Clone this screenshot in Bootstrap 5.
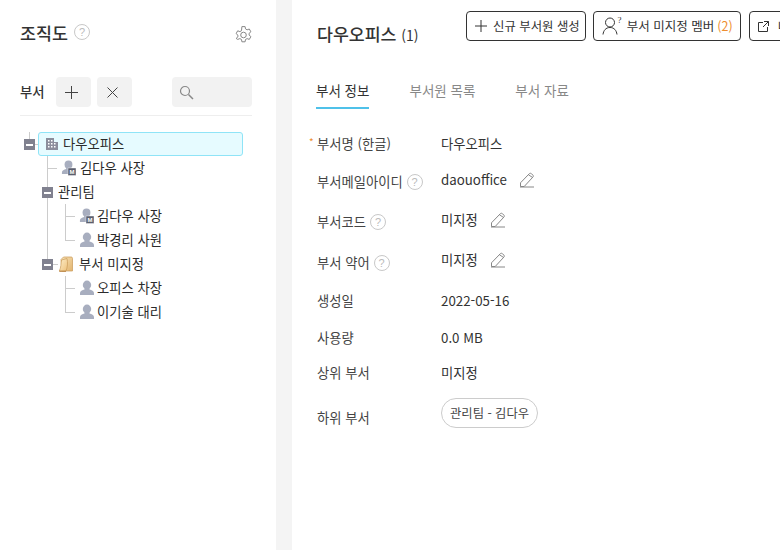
<!DOCTYPE html>
<html lang="ko">
<head>
<meta charset="utf-8">
<title>조직도</title>
<link href="https://cdn.jsdelivr.net/npm/bootstrap@5.3.0/dist/css/bootstrap.min.css" rel="stylesheet">
<style>
html,body{margin:0;height:100%;overflow:hidden;background:#fff}
body{font-family:"Noto Sans CJK KR","Noto Sans",sans-serif;font-size:13.3px;color:#333;line-height:1.3}
.app-shell{width:780px;height:550px;overflow:hidden}
.org-side{width:276px;flex:0 0 276px;padding:22px 24px 0 20px}
.org-gutter{width:16px;flex:0 0 16px;background:#f4f4f4}
.org-main{flex:1 1 auto;min-width:0;overflow:hidden;padding:11px 0 0 25px}
.side-head{height:27px}
.side-title{font-size:17.4px;font-weight:500;color:#333}
.hint{width:16px;height:16px;border:1px solid #c8c8c8;border-radius:50%;color:#bbb;font-size:11px;line-height:14px;text-align:center;font-family:"Liberation Sans",sans-serif;flex:none}
.title-hint{margin-left:6px;margin-bottom:3px}
.side-tools{margin-top:28px;height:30px;margin-bottom:8px}
.tools-label{font-weight:500;color:#333;width:36px}
.tool-btn{width:35px;height:30px;padding:0;background:#f2f2f2;border:0;border-radius:4px;display:flex;align-items:center;justify-content:center}
.tool-plus{padding-right:4px}
.tool-cross{margin-left:6px;padding-right:5px}
.tool-search{width:80px;height:30px;background:#f2f2f2;border-radius:4px;padding-left:7px;margin-left:40px}
.tool-rule{height:1px;background:#eee;margin-bottom:16px}
.org-tree{margin-left:-20px}
.tree-row{height:24px}
.ind24{width:24px;flex:none}
.ind42{width:42px;flex:none}
.ind47{width:47px;flex:none}
.ind65{width:65px;flex:none}
.tree-exp{width:11px;height:24px;flex:none;display:flex;align-items:center;justify-content:center}
.exp-box{width:11px;height:11px;background:#80818f;display:flex;align-items:center;justify-content:center}
.exp-box::before{content:"";width:7px;height:1px;background:#fff;box-shadow:0 1px 0 #fff}
.line-full{background:linear-gradient(#ccc,#ccc) 5px 0/1px 100% no-repeat}
.line-top{background:linear-gradient(#ccc,#ccc) 5px 0/1px 50% no-repeat}
.stub3{width:3px;height:1px;background:#ccc;flex:none}
.stub5{width:5px;height:1px;background:#ccc;flex:none}
.guide-v{width:18px;height:24px;flex:none;background:linear-gradient(#ccc,#ccc) 0 0/1px 100% no-repeat}
.guide-t,.guide-l{width:14px;height:24px;flex:none}
.guide-t{background:linear-gradient(#ccc,#ccc) 0 0/1px 100% no-repeat,linear-gradient(#ccc,#ccc) 0 50%/10px 1px no-repeat}
.guide-l{background:linear-gradient(#ccc,#ccc) 0 0/1px 50% no-repeat,linear-gradient(#ccc,#ccc) 0 50%/10px 1px no-repeat}
.tree-sel{width:205px;height:24px;background:#e6fbff;border:1px solid #8fe4f7;border-radius:3px;padding-left:6px}
.tree-txt{color:#2b2b2b;white-space:nowrap;font-size:13.3px;margin-bottom:1px}
.tg2{margin-left:2px}.tg3{margin-left:3px}.tg5{margin-left:5px}
.main-head{height:30px}
.main-title{font-size:17.3px;font-weight:500;color:#333;width:149px;flex:none;padding-top:12px;white-space:nowrap}
.main-count{font-size:14px;font-weight:400}
.act-btn{height:30px;padding:0 7px 0 8px;font-size:12.5px;line-height:1;color:#333;background:#fff;border:1px solid #333;border-radius:4px;white-space:nowrap;flex:none;display:flex;align-items:center}
.act-btn:hover{color:#333;background:#fff;border-color:#333}
.act-gap1{margin-right:7px;gap:6px;padding-right:5px;font-size:12.4px}
.act-gap2{margin-right:8px;gap:5px}
.act-gap3{gap:9px}
.orange{color:#ee8e2f;margin-left:-2px}
.tab-bar{margin-top:37px;margin-left:-1px;gap:40px;height:31px;flex-wrap:nowrap}
.tab-item{color:#888;padding:0;font-size:13.5px;height:31px;line-height:24px;white-space:nowrap;border-bottom:2px solid transparent}
.tab-item:hover{color:#888}
.tab-item.on,.tab-item.on:hover{color:#333;border-bottom-color:#4fc1e9}
.form-list{margin-top:16px}
.info-row{display:flex;align-items:center;white-space:nowrap}
.info-key{width:124px;flex:none;position:relative;display:flex;align-items:center;gap:4px;color:#444}
.info-val{display:flex;align-items:center;color:#333}
.req{position:absolute;left:-8px;top:0;color:#ee8e2f;font-size:10px}
.h-a{height:37px}.h-b{height:39px}.h-c{height:41px}.h-d{height:35px}.h-e{height:39px}.h-f{height:31px}.h-g{height:59px}
.lift2{margin-top:-3px}.lift3{margin-top:-5px}
.edit-g{margin-left:12px}
.sub-chip{height:30px;padding:0 8px;border:1px solid #ccc;border-radius:15px;font-size:12.3px;color:#444;display:flex;align-items:center;margin-top:-10px}
svg{display:block;flex:none}
.sprite{position:absolute;width:0;height:0}
</style>
</head>
<body>
<svg class="sprite" width="0" height="0">
  <defs>
    <symbol id="person" viewBox="0 0 16 16"><ellipse cx="8" cy="5" rx="4.200" ry="4.400" fill="#a8aebf"/><path d="M5.500 7.500h5v2c2.200.6 4.500 1.500 4.500 3.600V15H1v-1.900c0-2.100 2.300-3 4.500-3.600z" fill="#a8aebf"/></symbol>
    <symbol id="pencil" viewBox="0 0 16 16"><path d="M1.500 10.800 10.200 1.800c.8-.8 1.700-.7 2.500.1l1 1c.8.800.8 1.700 0 2.400L5.200 14.500H1.500zM1 15h14M9.400 2.700l4.500 3" fill="none" stroke="#888" stroke-width="1"/></symbol>
    <symbol id="gear" viewBox="0 0 17 18"><path d="M6.900 1h3.200l.4 2.300 1.600.9 2.200-.8 1.600 2.800-1.800 1.500v1.800l1.800 1.500-1.600 2.800-2.200-.8-1.600.9-.4 2.300H6.900l-.4-2.300-1.600-.9-2.200.8L1.100 12.800 2.900 11.300V9.500L1.100 8 2.700 5.200l2.200.8 1.600-.9z" transform="translate(0 -.4)" fill="none" stroke="#888" stroke-width="1" stroke-linejoin="round"/><circle cx="8.500" cy="9" r="2.800" fill="none" stroke="#888" stroke-width="1"/></symbol>
    <symbol id="person-m" viewBox="0 0 16 16"><use href="#person" width="15" height="15"/><rect x="7" y="8" width="8" height="7.500" fill="#5c5f6e" stroke="#fff" stroke-width=".4"/><text x="11" y="14" font-size="6" font-weight="700" text-anchor="middle" fill="#fff" font-family="Liberation Sans">M</text></symbol>
    <linearGradient id="fold-a" x1="0" y1="0" x2="1" y2="1"><stop offset="0" stop-color="#f8e3b8"/><stop offset="1" stop-color="#e2b46f"/></linearGradient>
    <linearGradient id="fold-b" x1="0" y1="0" x2="1" y2="1"><stop offset="0" stop-color="#fdeecb"/><stop offset="1" stop-color="#eec27c"/></linearGradient>
  </defs>
</svg>
<div class="app-shell d-flex">
  <aside class="org-side">
    <div class="side-head d-flex align-items-start justify-content-between">
      <div class="d-flex align-items-center"><span class="side-title">조직도</span><span class="hint title-hint">?</span></div>
      <svg width="17" height="18" class="mt-1"><use href="#gear"/></svg>
    </div>
    <div class="side-tools d-flex align-items-center">
      <span class="tools-label">부서</span>
      <button class="tool-btn tool-plus" type="button" aria-label="추가"><svg width="13" height="13" viewBox="0 0 13 13"><path d="M6.500 0v13M0 6.500h13" stroke="#444" stroke-width="1" fill="none"/></svg></button>
      <button class="tool-btn tool-cross" type="button" aria-label="삭제"><svg width="11" height="11" viewBox="0 0 11 11"><path d="M.5.500l10 10M10.500.500l-10 10" stroke="#444" stroke-width="1" fill="none"/></svg></button>
      <div class="tool-search d-flex align-items-center"><svg width="15" height="15" viewBox="0 0 15 15"><circle cx="6" cy="6" r="4.500" fill="none" stroke="#888" stroke-width="1.200"/><path d="m9.500 9.500 4.500 4.500" stroke="#888" stroke-width="1.500" fill="none"/></svg></div>
    </div>
    <div class="tool-rule"></div>
    <div class="org-tree">
      <div class="tree-row d-flex align-items-center">
        <span class="ind24"></span>
        <span class="tree-exp line-top"><span class="exp-box"></span></span><span class="stub3"></span>
        <div class="tree-sel d-flex align-items-center gap-1">
          <svg width="14" height="14" viewBox="0 0 14 14"><path d="M1 1h8v4h4v8H1z" fill="#8b8d9b"/><g fill="#fff"><rect x="3" y="3" width="1.500" height="1.500"/><rect x="6" y="3" width="1.500" height="1.500"/><rect x="3" y="6" width="1.500" height="1.500"/><rect x="6" y="6" width="1.500" height="1.500"/><rect x="9" y="6" width="1.500" height="1.500"/><rect x="3" y="9" width="1.500" height="1.500"/><rect x="6" y="9" width="1.500" height="1.500"/><rect x="9" y="9" width="1.500" height="1.500"/></g></svg>
          <span class="tree-txt">다우오피스</span>
        </div>
      </div>
      <div class="tree-row d-flex align-items-center">
        <span class="ind47"></span><span class="guide-t"></span>
        <svg width="16" height="16"><use href="#person-m"/></svg>
        <span class="tree-txt tg3">김다우 사장</span>
      </div>
      <div class="tree-row d-flex align-items-center">
        <span class="ind42"></span><span class="tree-exp line-full"><span class="exp-box"></span></span>
        <span class="tree-txt tg5">관리팀</span>
      </div>
      <div class="tree-row d-flex align-items-center">
        <span class="ind47"></span><span class="guide-v"></span><span class="guide-t"></span>
        <svg width="16" height="16"><use href="#person-m"/></svg>
        <span class="tree-txt tg2">김다우 사장</span>
      </div>
      <div class="tree-row d-flex align-items-center">
        <span class="ind47"></span><span class="guide-v"></span><span class="guide-l"></span>
        <svg width="16" height="16"><use href="#person"/></svg>
        <span class="tree-txt tg2">박경리 사원</span>
      </div>
      <div class="tree-row d-flex align-items-center">
        <span class="ind42"></span><span class="tree-exp line-top"><span class="exp-box"></span></span><span class="stub5"></span>
        <svg width="16" height="16" viewBox="0 0 16 16"><path d="M3 3.500 5.500 1h7.500c1 0 1.500.5 1.500 1.500V15H4z" fill="url(#fold-a)" stroke="#c99a58" stroke-width=".7"/><path d="M1.300 15C3 12 3 7 3.500 4L9 2.500c1 4 .5 9-1 12.500z" fill="url(#fold-b)" stroke="#c99a58" stroke-width=".7"/><path d="M1.300 15.300H8" stroke="#b98545" stroke-width="1"/></svg>
        <span class="tree-txt tg5">부서 미지정</span>
      </div>
      <div class="tree-row d-flex align-items-center">
        <span class="ind65"></span><span class="guide-t"></span>
        <svg width="16" height="16"><use href="#person"/></svg>
        <span class="tree-txt tg2">오피스 차장</span>
      </div>
      <div class="tree-row d-flex align-items-center">
        <span class="ind65"></span><span class="guide-l"></span>
        <svg width="16" height="16"><use href="#person"/></svg>
        <span class="tree-txt tg2">이기술 대리</span>
      </div>
    </div>
  </aside>
  <div class="org-gutter"></div>
  <main class="org-main">
    <div class="main-head d-flex align-items-start">
      <div class="main-title">다우오피스 <span class="main-count">(1)</span></div>
      <button class="btn act-btn act-gap1" type="button"><svg width="12" height="12" viewBox="0 0 12 12"><path d="M6 0v12M0 6h12" stroke="#333" stroke-width="1" fill="none"/></svg>신규 부서원 생성</button>
      <button class="btn act-btn act-gap2" type="button"><svg width="20" height="20" viewBox="0 0 20 20"><circle cx="8" cy="6.500" r="4.500" fill="none" stroke="#333"/><path d="M1 18.500c.5-4 2.800-7 7-7s6.500 3 7 7" fill="none" stroke="#333"/><text x="15.500" y="7" font-size="9" fill="#333" font-family="Liberation Serif">?</text></svg>부서 미지정 멤버 <span class="orange">(2)</span></button>
      <button class="btn act-btn act-gap3" type="button"><svg width="11" height="11" viewBox="0 0 11 11"><path d="M5 1.500H.5v9h9V6M6 .5h4.500V5M10.500.5 5 6" fill="none" stroke="#333"/></svg>내보내기</button>
    </div>
    <nav class="nav tab-bar">
      <a class="nav-link tab-item on" href="#">부서 정보</a>
      <a class="nav-link tab-item" href="#">부서원 목록</a>
      <a class="nav-link tab-item" href="#">부서 자료</a>
    </nav>
    <div class="form-list">
      <div class="info-row h-a"><div class="info-key"><span class="req">*</span>부서명 (한글)</div><div class="info-val">다우오피스</div></div>
      <div class="info-row h-b"><div class="info-key">부서메일아이디 <span class="hint">?</span></div><div class="info-val lift2">daouoffice<svg class="edit-g" width="16" height="16"><use href="#pencil"/></svg></div></div>
      <div class="info-row h-c"><div class="info-key">부서코드 <span class="hint">?</span></div><div class="info-val lift2">미지정<svg class="edit-g" width="16" height="16"><use href="#pencil"/></svg></div></div>
      <div class="info-row h-c"><div class="info-key">부서 약어 <span class="hint">?</span></div><div class="info-val lift3">미지정<svg class="edit-g" width="16" height="16"><use href="#pencil"/></svg></div></div>
      <div class="info-row h-d"><div class="info-key">생성일</div><div class="info-val">2022-05-16</div></div>
      <div class="info-row h-e"><div class="info-key">사용량</div><div class="info-val">0.0 MB</div></div>
      <div class="info-row h-f"><div class="info-key">상위 부서</div><div class="info-val">미지정</div></div>
      <div class="info-row h-g"><div class="info-key">하위 부서</div><div class="info-val"><span class="sub-chip">관리팀 - 김다우</span></div></div>
    </div>
  </main>
</div>
<script src="https://cdn.jsdelivr.net/npm/bootstrap@5.3.0/dist/js/bootstrap.bundle.min.js"></script>
</body>
</html>
